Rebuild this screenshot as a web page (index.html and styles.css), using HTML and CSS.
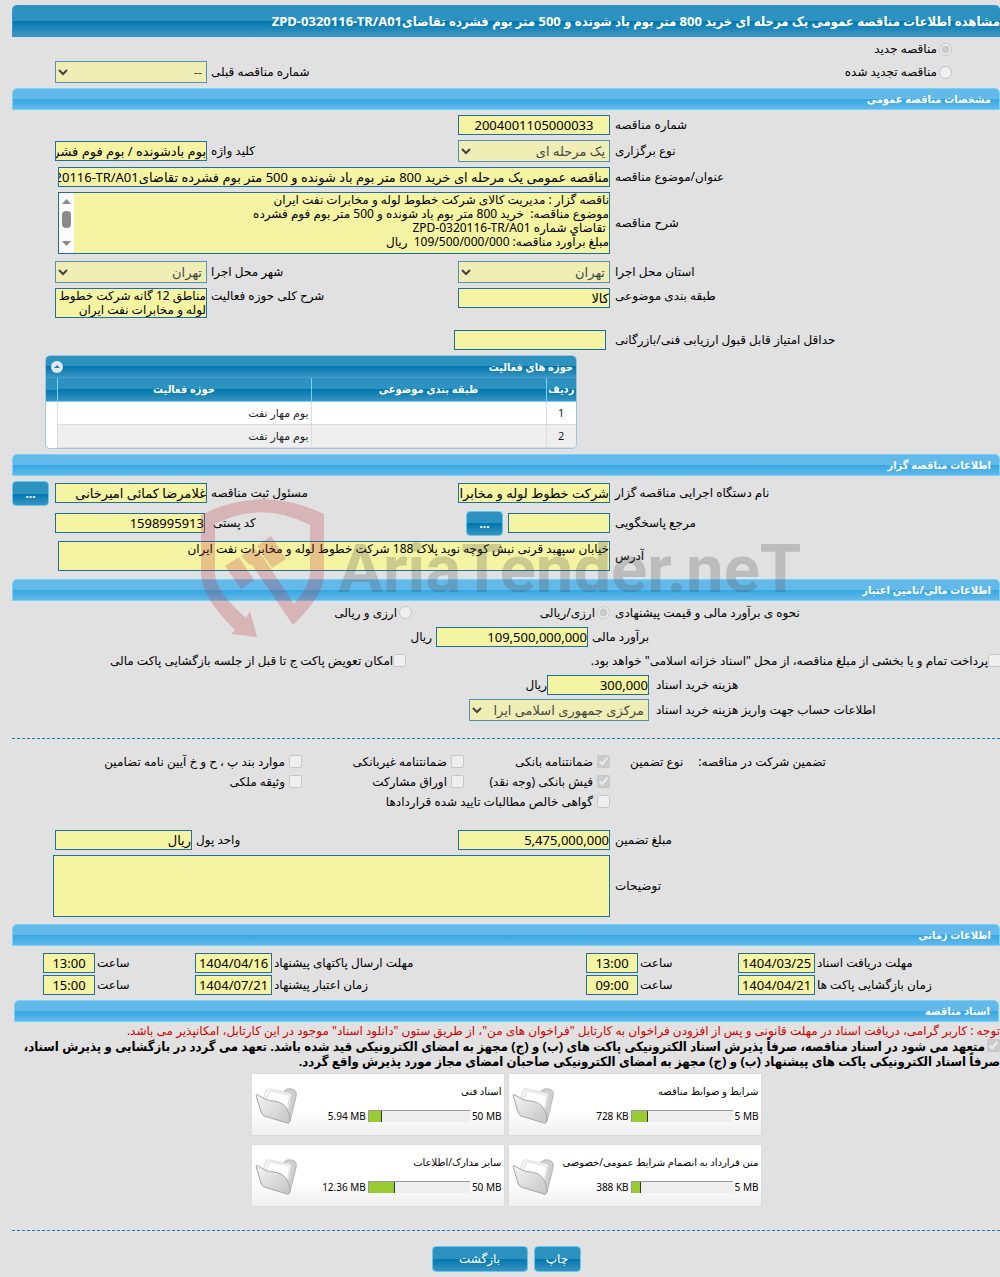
FILE: index.html
```html
<!DOCTYPE html>
<html lang="fa" dir="rtl">
<head>
    <meta charset="UTF-8">
    <meta name="viewport" content="width=device-width, initial-scale=1.0">
    <title>مشاهده اطلاعات مناقصه عمومی</title>
    <link rel="stylesheet" href="styles.css">
</head>
<body>
<main class="page">
    <h1 class="page-title">مشاهده اطلاعات مناقصه عمومی یک مرحله ای خرید 800 متر بوم باد شونده و 500 متر بوم فشرده تقاضایZPD-0320116-TR/A01</h1>

    <div class="tender-kind">
        <div class="kind-row">
            <span class="check"><input type="radio" name="kind" id="kind-new" checked disabled><label for="kind-new">مناقصه جدید</label></span>
        </div>
        <div class="kind-row">
            <span class="check"><input type="radio" name="kind" id="kind-renew" disabled><label for="kind-renew">مناقصه تجدید شده</label></span>
            <div class="prev">
                <label class="side-label" for="prev">شماره مناقصه قبلی</label>
                <select class="field" id="prev" disabled><option>--</option></select>
            </div>
        </div>
    </div>

    <h2 class="section-title">مشخصات مناقصه عمومی</h2>
    <section class="rows">
        <div class="row">
            <label for="number">شماره مناقصه</label>
            <div class="rest"><input class="field center" id="number" type="text" value="2004001105000033" readonly></div>
        </div>
        <div class="row">
            <label for="type">نوع برگزاری</label>
            <div class="rest">
                <select class="field" id="type" disabled><option>یک مرحله ای</option></select>
                <label class="side-label" for="keyword">کلید واژه</label>
                <input class="field" id="keyword" type="text" value="بوم بادشونده / بوم فوم فشرده" readonly>
            </div>
        </div>
        <div class="row">
            <label for="subject">عنوان/موضوع مناقصه</label>
            <div class="rest"><input class="field wide" id="subject" type="text" value="مناقصه عمومی یک مرحله ای خرید 800 متر بوم باد شونده و 500 متر بوم فشرده تقاضایZPD-0320116-TR/A01" readonly></div>
        </div>
        <div class="row row-desc">
            <label for="desc">شرح مناقصه</label>
            <div class="rest">
                <div class="scroll-box">
                    <textarea class="field wide tall" id="desc" readonly>ناقصه گزار : مدیریت کالای شرکت خطوط لوله و مخابرات نفت ایران
موضوع مناقصه:  خرید 800 متر بوم باد شونده و 500 متر بوم فوم فشرده
 تقاضاي شماره ZPD-0320116-TR/A01
مبلغ برآورد مناقصه: 109/500/000/000  ریال</textarea>
                    <svg class="scrollbar" viewBox="0 0 15 60" width="15" height="60" aria-hidden="true">
                        <rect width="15" height="60" fill="#fcfcfc"/>
                        <path d="M3 11 7.500 6 12 11zM3 48h9l-4.500 5z" fill="#8b8b8b"/>
                        <rect x="3" y="18" width="9" height="17" rx="4" fill="#8b8b8b"/>
                    </svg>
                </div>
            </div>
        </div>
        <div class="row">
            <label for="province">استان محل اجرا</label>
            <div class="rest">
                <select class="field" id="province" disabled><option>تهران</option></select>
                <label class="side-label" for="city">شهر محل اجرا</label>
                <select class="field" id="city" disabled><option>تهران</option></select>
            </div>
        </div>
        <div class="row row-top">
            <label for="category">طبقه بندی موضوعی</label>
            <div class="rest">
                <input class="field" id="category" type="text" value="کالا" readonly>
                <label class="side-label" for="area">شرح کلی حوزه فعالیت</label>
                <textarea class="field short" id="area" readonly>مناطق 12 گانه شرکت خطوط لوله و مخابرات نفت ایران</textarea>
            </div>
        </div>
        <div class="row row-score">
            <label for="score">حداقل امتیاز قابل قبول ارزیابی فنی/بازرگانی</label>
            <div class="rest"><input class="field" id="score" type="text" readonly></div>
        </div>
        <div class="activity">
            <div class="activity-head">
                <span>حوزه های فعالیت</span>
                <button class="collapse" type="button" aria-label="بستن">
                    <svg viewBox="0 0 12 12" width="12" height="12"><circle cx="6" cy="6" r="6" fill="#dfe9f6"/><path d="M3 7 6 4l3 3z" fill="#1d7fb3"/></svg>
                </button>
            </div>
            <table>
                <thead>
                    <tr><th class="col-no">ردیف</th><th class="col-cat">طبقه بندی موضوعی</th><th>حوزه فعالیت</th><th class="col-pad"></th></tr>
                </thead>
                <tbody>
                    <tr><td class="center">1</td><td></td><td>بوم مهار نفت</td><td></td></tr>
                    <tr><td class="center">2</td><td></td><td>بوم مهار نفت</td><td></td></tr>
                </tbody>
            </table>
        </div>
    </section>

    <h2 class="section-title">اطلاعات مناقصه گزار</h2>
    <section class="rows owner">
        <div class="row">
            <label for="org">نام دستگاه اجرایی مناقصه گزار</label>
            <div class="rest">
                <input class="field" id="org" type="text" value="شرکت خطوط لوله و مخابرات نفت ایران" readonly>
                <label class="side-label" for="officer">مسئول ثبت مناقصه</label>
                <input class="field" id="officer" type="text" value="غلامرضا کمائی امیرخانی" readonly>
                <button class="btn btn-more push" type="button">...</button>
            </div>
        </div>
        <div class="row">
            <label for="contact">مرجع پاسخگویی</label>
            <div class="rest">
                <input class="field contact" id="contact" type="text" readonly>
                <button class="btn btn-more" type="button">...</button>
                <label class="side-label postal-label" for="postal">کد پستی</label>
                <input class="field postal" id="postal" type="text" value="1598995913" readonly>
            </div>
        </div>
        <div class="row">
            <label for="address">آدرس</label>
            <div class="rest"><textarea class="field wide short" id="address" readonly>خیابان سپهبد قرنی نبش کوچه نوید پلاک 188 شرکت خطوط لوله و مخابرات نفت ایران</textarea></div>
        </div>
    </section>

    <h2 class="section-title">اطلاعات مالی/تامین اعتبار</h2>
    <section class="rows finance">
        <div class="row">
            <span>نحوه ی برآورد مالی و قیمت پیشنهادی</span>
            <div class="rest">
                <span class="check first-check"><input type="radio" name="currency" id="cur-one" checked disabled><label for="cur-one">ارزی/ریالی</label></span>
                <span class="check"><input type="radio" name="currency" id="cur-both" disabled><label for="cur-both">ارزی و ریالی</label></span>
            </div>
        </div>
        <div class="row row-estimate">
            <label for="estimate">برآورد مالی</label>
            <div class="rest"><input class="field" id="estimate" type="text" value="109,500,000,000" readonly><span class="unit">ریال</span></div>
        </div>
        <div class="treasury">
            <span class="check"><input type="checkbox" id="treasury" disabled><label for="treasury">پرداخت تمام و یا بخشی از مبلغ مناقصه، از محل "اسناد خزانه اسلامی" خواهد بود.</label></span>
            <span class="check"><input type="checkbox" id="swap" disabled><label for="swap">امکان تعویض پاکت ج تا قبل از جلسه بازگشایی پاکت مالی</label></span>
        </div>
        <div class="row row-cost">
            <label for="cost">هزینه خرید اسناد</label>
            <div class="rest"><input class="field cost" id="cost" type="text" value="300,000" readonly><span>ریال</span></div>
        </div>
        <div class="row row-cost">
            <label for="account">اطلاعات حساب جهت واریز هزینه خرید اسناد</label>
            <div class="rest"><select class="field account" id="account" disabled><option>مرکزی جمهوری اسلامی ایرا</option></select></div>
        </div>
    </section>

    <hr class="divider">

    <section class="guarantee">
        <div class="row">
            <div class="guarantee-label"><span>تضمین شرکت در مناقصه:</span><span>نوع تضمین</span></div>
            <div class="guarantee-types">
                <span class="check"><input type="checkbox" id="g1" checked disabled><label for="g1">ضمانتنامه بانکی</label></span>
                <span class="check"><input type="checkbox" id="g2" disabled><label for="g2">ضمانتنامه غیربانکی</label></span>
                <span class="check"><input type="checkbox" id="g3" disabled><label for="g3">موارد بند پ ، ح و خ آیین نامه تضامین</label></span>
                <span class="check"><input type="checkbox" id="g4" checked disabled><label for="g4">فیش بانکی (وجه نقد)</label></span>
                <span class="check"><input type="checkbox" id="g5" disabled><label for="g5">اوراق مشارکت</label></span>
                <span class="check"><input type="checkbox" id="g6" disabled><label for="g6">وثیقه ملکی</label></span>
                <span class="check full"><input type="checkbox" id="g7" disabled><label for="g7">گواهی خالص مطالبات تایید شده قراردادها</label></span>
            </div>
        </div>
        <div class="rows">
            <div class="row">
                <label for="amount">مبلغ تضمین</label>
                <div class="rest">
                    <input class="field" id="amount" type="text" value="5,475,000,000" readonly>
                    <label class="side-label unit-label" for="unit">واحد پول</label>
                    <input class="field unit-field" id="unit" type="text" value="ریال" readonly>
                </div>
            </div>
            <div class="row">
                <label for="notes">توضیحات</label>
                <div class="rest"><textarea class="field notes tall" id="notes" readonly></textarea></div>
            </div>
        </div>
    </section>

    <h2 class="section-title">اطلاعات زمانی</h2>
    <section class="dates">
        <label for="d1">مهلت دریافت اسناد</label><input class="field" id="d1" type="text" value="1404/03/25" readonly>
        <label for="t1">ساعت</label><input class="field" id="t1" type="text" value="13:00" readonly>
        <label for="d2">مهلت ارسال پاکتهای پیشنهاد</label><input class="field" id="d2" type="text" value="1404/04/16" readonly>
        <label for="t2">ساعت</label><input class="field" id="t2" type="text" value="13:00" readonly>
        <span></span>
        <label for="d3">زمان بازگشایی پاکت ها</label><input class="field" id="d3" type="text" value="1404/04/21" readonly>
        <label for="t3">ساعت</label><input class="field" id="t3" type="text" value="09:00" readonly>
        <label for="d4">زمان اعتبار پیشنهاد</label><input class="field" id="d4" type="text" value="1404/07/21" readonly>
        <label for="t4">ساعت</label><input class="field" id="t4" type="text" value="15:00" readonly>
        <span></span>
    </section>

    <h2 class="section-title docs-title">اسناد مناقصه</h2>
    <p class="notice">توجه : کاربر گرامی، دریافت اسناد در مهلت قانونی و پس از افزودن فراخوان به کارتابل "فراخوان های من"، از طریق ستون "دانلود اسناد" موجود در این کارتابل، امکانپذیر می باشد.</p>
    <p class="pledge"><input type="checkbox" id="pledge" checked disabled><label for="pledge">متعهد می شود در اسناد مناقصه، صرفاً پذیرش اسناد الکترونیکی پاکت های (ب) و (ج) مجهز به امضای الکترونیکی قید شده باشد. تعهد می گردد در بازگشایی و پذیرش اسناد،<br>صرفاً اسناد الکترونیکی پاکت های پیشنهاد (ب) و (ج) مجهز به امضای الکترونیکی صاحبان امضای مجاز مورد پذیرش واقع گردد.</label></p>

    <svg class="defs" width="0" height="0" aria-hidden="true">
        <defs>
            <linearGradient id="front" x1="0" y1="0" x2="1" y2="1"><stop offset="0" stop-color="#f4f4f4"/><stop offset=".6" stop-color="#d8d8d8"/><stop offset="1" stop-color="#c4c4c4"/></linearGradient>
            <symbol id="folder" viewBox="0 0 42 37">
                <path d="M28 5 32 2q7-1 9 3 1 2-1 9l-5 20q-1 2-3 0z" fill="#cfcfcf" stroke="#a9a9a9" stroke-width=".8"/>
                <path d="M8 12 11 3q1-2 4-1l20 4q2 1 1 4l-4 20z" fill="#f3f3f3" stroke="#d2d2d2" stroke-width=".7"/>
                <path d="M11 14 15 4l18 4q2 1 1 4l-3 18z" fill="#fff" stroke="#dadada" stroke-width=".7"/>
                <path d="M1 8q0-1 2 0l7 4q4 2 9 2 9 1 13 8 3 5 3 10 0 5-3 4L9 29q-2-1-3-4z" fill="url(#front)" stroke="#a6a6a6" stroke-width="1"/>
            </symbol>
        </defs>
    </svg>
    <section class="docs">
        <article class="doc">
            <div class="doc-info">
                <a class="doc-name" href="#">شرایط و ضوابط مناقصه</a>
                <div class="doc-size"><bdi>5 MB</bdi><div class="bar"><div class="bar-fill" style="width: 16%"></div></div><bdi>728 KB</bdi></div>
            </div>
            <svg class="folder"><use href="#folder"/></svg>
        </article>
        <article class="doc">
            <div class="doc-info">
                <a class="doc-name" href="#">اسناد فنی</a>
                <div class="doc-size"><bdi>50 MB</bdi><div class="bar"><div class="bar-fill" style="width: 13%"></div></div><bdi>5.94 MB</bdi></div>
            </div>
            <svg class="folder"><use href="#folder"/></svg>
        </article>
        <article class="doc">
            <div class="doc-info">
                <a class="doc-name" href="#">متن قرارداد به انضمام شرایط عمومی/خصوصی</a>
                <div class="doc-size"><bdi>5 MB</bdi><div class="bar"><div class="bar-fill" style="width: 9%"></div></div><bdi>388 KB</bdi></div>
            </div>
            <svg class="folder"><use href="#folder"/></svg>
        </article>
        <article class="doc">
            <div class="doc-info">
                <a class="doc-name" href="#">سایر مدارک/اطلاعات</a>
                <div class="doc-size"><bdi>50 MB</bdi><div class="bar"><div class="bar-fill" style="width: 26%"></div></div><bdi>12.36 MB</bdi></div>
            </div>
            <svg class="folder"><use href="#folder"/></svg>
        </article>
    </section>

    <hr class="divider">

    <div class="actions">
        <button class="btn btn-print" type="button">چاپ</button>
        <button class="btn btn-back" type="button">بازگشت</button>
    </div>

    <div class="watermark">
        <svg viewBox="0 0 126 140" width="126" height="140" aria-hidden="true">
            <path d="M1 16Q62-15 124 15V76Q124 96 93 126L50 63 60 57 63 58 94 105Q110 86 110 73V26Q62 1 15 25V74Q15 92 46 119L50 112 57 138 31 135 35 131Q1 98 1 74Z"/>
            <path d="M25 67 39 58 54 81 41 90ZM41 57 54 49 63 58 50 66ZM57 47 71 37 86 60 72 69Z"/>
        </svg>
        <span>AriaTender.neT</span>
    </div>
</main>
</body>
</html>
```
FILE: styles.css
```css
* {
    box-sizing: border-box;
}

body {
    margin: 0;
    background: #e1e1e1;
    color: #000;
    font-family: "Noto Sans", "DejaVu Sans", sans-serif;
    font-size: 12px;
    line-height: 16px;
}

.page {
    position: relative;
    padding: 5px 0 5px 12px;
    overflow: hidden;
}

h1, h2, p {
    margin: 0;
}

.page-title,
.section-title,
.activity,
th {
    font-family: "Noto Sans", "DejaVu Sans Condensed", sans-serif;
    font-weight: bold;
    color: #fff;
}

.page-title {
    height: 32px;
    font-size: 13px;
    line-height: 30px;
    white-space: nowrap;
    border: 1px solid #2e94dc;
    border-right: 0;
    border-radius: 5px 5px 0 0;
    background: linear-gradient(#2e92c0 50%, #0077ae 50%, #3d97c3);
}

.section-title {
    height: 22px;
    padding-right: 8px;
    font-size: 11px;
    line-height: 20px;
    border: 1px solid #74d3f8;
    border-radius: 5px 5px 0 0;
    background: linear-gradient(#63baea 50%, #36a6e2 50%, #60b9ea);
}

/* controls */
.field {
    width: 152px;
    height: 20px;
    margin: 0;
    padding: 0;
    border: 1px solid #1e6fa3;
    border-radius: 0;
    background-color: #f5f4a3;
    color: #000;
    font-family: inherit;
    font-size: 13px;
    outline: 0;
    resize: none;
    flex: none;
}

select.field {
    height: 22px;
}

select.field:disabled {
    color: #000;
    opacity: 0.7;
}

textarea.field {
    display: block;
    font-size: 12px;
    line-height: 14px;
    overflow: hidden;
}

.field.wide {
    width: 552px;
}

.field.tall {
    height: 62px;
}

.field.short {
    height: 30px;
}

.center {
    text-align: center;
}

.check {
    display: inline-flex;
    align-items: center;
    white-space: nowrap;
}

input[type="radio"],
input[type="checkbox"] {
    width: 13px;
    height: 13px;
    margin: 0 0 0 2px;
    flex: none;
}

.btn {
    height: 25px;
    padding: 0;
    border: 1px solid #5fcbf0;
    border-radius: 4px;
    background: linear-gradient(#2e92c0 50%, #0077ae 50%, #3a94c0);
    color: #fff;
    font-family: inherit;
    font-size: 12px;
    flex: none;
}

.btn-more {
    width: 37px;
    font-weight: bold;
}

/* rows: a stretching label column and a fixed block of fields */
.rows {
    display: flex;
    flex-direction: column;
    gap: 5px;
    padding: 5px 0;
}

.row {
    display: grid;
    grid-template-columns: 1fr 598px;
    column-gap: 5px;
    align-items: center;
    text-align: left;
}

.rest {
    display: flex;
    align-items: center;
}

.side-label {
    width: 251px;
    padding-left: 4px;
    text-align: left;
}

.row-desc {
    margin-bottom: 2px;
}

.row-top,
.row-top .rest {
    align-items: flex-start;
}

.row-score {
    grid-template-columns: 1fr 594px;
    column-gap: 9px;
    margin-top: 7px;
}

.scroll-box {
    position: relative;
}

.scrollbar {
    position: absolute;
    left: 1px;
    top: 1px;
}

.tender-kind {
    display: grid;
    gap: 1px;
    padding: 1px 0 5px;
}

.kind-row {
    display: flex;
    justify-content: space-between;
    height: 22px;
    padding: 0 48px 0 43px;
}

.prev {
    display: flex;
    align-items: center;
}

/* activity table */
.activity {
    align-self: flex-end;
    width: 532px;
    margin-left: 33px;
    border: 1px solid #9cc5e0;
    border-radius: 5px;
    overflow: hidden;
    background: #fff;
}

.activity-head {
    display: flex;
    justify-content: space-between;
    align-items: center;
    height: 22px;
    padding: 0 3px 0 5px;
    font-size: 11px;
    border-bottom: 1px solid #3f9ccb;
    background: linear-gradient(#2e92c0 50%, #0077ae 50%, #3a94c0);
}

.collapse {
    display: flex;
    padding: 0;
    border: 0;
    background: none;
}

table {
    width: 100%;
    table-layout: fixed;
    border-collapse: collapse;
}

th {
    height: 23px;
    padding: 0;
    font-size: 11px;
    border-bottom: 1px solid #74d3f8;
    background: linear-gradient(#2e92c0 50%, #0077ae 50%, #3a94c0);
}

th + th {
    border-right: 1px solid #74d3f8;
}

td {
    height: 23px;
    padding: 0 2px;
    color: #222;
    font-family: "Noto Sans", "DejaVu Sans", sans-serif;
    font-size: 11px;
    font-weight: normal;
    border-bottom: 1px solid #ddd;
}

td + td {
    border-right: 1px solid #ddd;
}

tbody tr:nth-child(2) td:not(:last-child) {
    background: #eee;
}

td:last-child {
    border-bottom: 0;
}

.col-no {
    width: 30px;
}

.col-cat {
    width: 235px;
}

.col-pad {
    width: 11px;
}

/* owner */
.owner {
    padding-bottom: 8px;
}

.push {
    margin-right: 6px;
}

.contact {
    width: 102px;
    margin-left: 5px;
}

.field.postal {
    width: 150px;
}

.postal-label {
    width: 261px;
    padding-left: 8px;
}

/* finance */
.finance {
    gap: 4px;
    padding: 2px 0 0;
}

.finance .row,
.treasury {
    min-height: 20px;
}

.first-check {
    width: 198px;
}

.row-estimate {
    grid-template-columns: 1fr 576px;
    column-gap: 4px;
}

.unit {
    margin-right: 4px;
}

.row-cost {
    grid-template-columns: 1fr 637px;
    column-gap: 7px;
}

.cost {
    width: 102px;
}

.account {
    width: 180px;
}

.treasury {
    display: flex;
    justify-content: space-between;
    padding-left: 98px;
}

.treasury input[type="checkbox"] {
    margin: 0 -1px 0 0;
}

.divider {
    height: 0;
    margin: 17px 0 0;
    border: 0;
    border-top: 1px dashed #1e7fb0;
}

/* guarantee */
.guarantee {
    padding: 13px 0 2px;
}

.guarantee > .row {
    align-items: start;
}

.guarantee-label {
    display: flex;
    justify-content: flex-end;
    gap: 15px;
    padding: 2px 0 0 15px;
}

.guarantee-types {
    display: grid;
    grid-template-columns: 146px 162px 1fr;
    grid-auto-rows: 20px;
}

.guarantee-types input {
    margin-left: 4px;
}

.full {
    grid-column: 1 / -1;
}

.guarantee .rows {
    padding-top: 18px;
}

.unit-label {
    width: 266px;
}

.unit-field {
    width: 137px;
}

.notes {
    width: 557px;
}

/* dates */
.dates {
    display: grid;
    grid-template-columns: 1fr 77px 100px 52px 314px 77px 100px 52px 31px;
    row-gap: 2px;
    align-items: center;
    padding: 7px 0 5px;
}

.dates label {
    padding-left: 2px;
    text-align: left;
}

.dates .field {
    width: 100%;
    text-align: center;
}

/* documents */
.docs-title {
    margin: 0 1px 0 2px;
}

.notice {
    margin-top: 1px;
    color: #d40000;
    white-space: nowrap;
}

.pledge {
    font-family: "Noto Sans", "DejaVu Sans Condensed", sans-serif;
    font-size: 13px;
    font-weight: bold;
    line-height: 15px;
    white-space: nowrap;
}

.pledge input {
    vertical-align: -1px;
}

.defs {
    display: block;
}

.docs {
    display: grid;
    grid-template-columns: 254px 254px;
    gap: 8px 3px;
    justify-content: center;
    padding-top: 4px;
}

.doc {
    display: flex;
    justify-content: space-between;
    height: 63px;
    padding: 9px 2px 0 3px;
    border: 1px solid #ddd;
    background: linear-gradient(#fff 60%, #efefef);
    font-size: 10px;
}

.doc-info {
    flex: 1;
    min-width: 0;
}

.doc-name {
    display: block;
    height: 25px;
    color: #000;
    text-decoration: none;
    white-space: nowrap;
}

.doc-size {
    display: flex;
    align-items: center;
    gap: 2px;
}

.bar {
    width: 102px;
    height: 12px;
    direction: ltr;
    background: #eee;
    border-top: 1px solid #999;
    border-left: 1px solid #999;
}

.bar-fill {
    height: 100%;
    background: #9c3;
    border-right: 1px solid #333;
}

.folder {
    width: 42px;
    height: 37px;
    margin-top: 4px;
    flex: none;
}

.docs + .divider {
    margin-top: 23px;
}

.actions {
    display: flex;
    justify-content: center;
    gap: 6px;
    padding-top: 15px;
}

.actions .btn {
    height: 26px;
}

.btn-print {
    width: 47px;
}

.btn-back {
    width: 96px;
}

/* logo laid over the form */
.watermark {
    position: absolute;
    left: 200px;
    top: 499px;
    display: flex;
    direction: ltr;
    gap: 12px;
    pointer-events: none;
}

.watermark svg {
    fill: #b92d37;
    opacity: 0.24;
}

.watermark span {
    color: rgba(80, 80, 80, 0.25);
    font-family: Roboto, sans-serif;
    font-size: 67px;
    font-weight: bold;
    line-height: 140px;
}
```
